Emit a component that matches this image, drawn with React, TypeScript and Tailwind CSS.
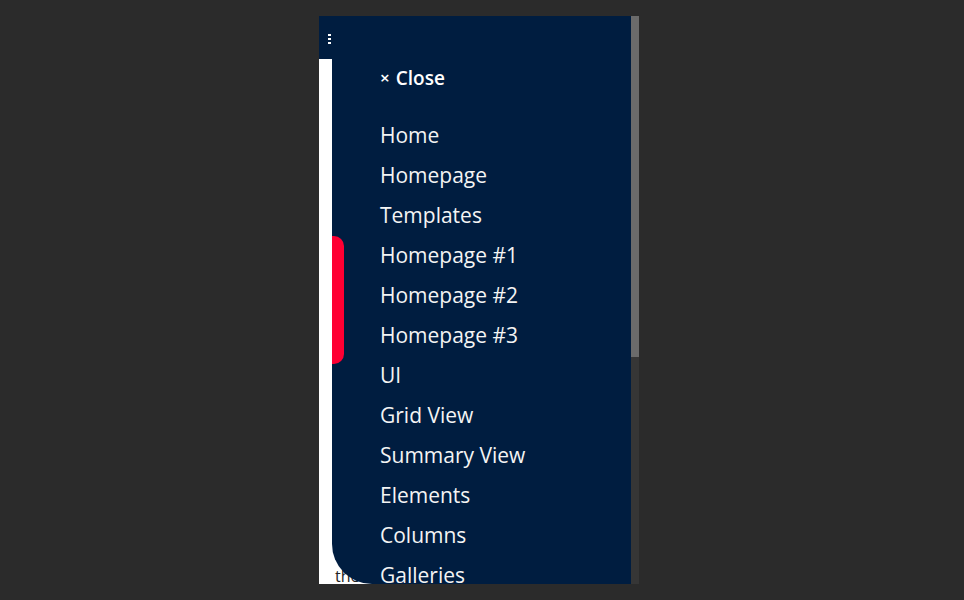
import React from 'react';

const menuItems = [
  'Home',
  'Homepage',
  'Templates',
  'Homepage #1',
  'Homepage #2',
  'Homepage #3',
  'UI',
  'Grid View',
  'Summary View',
  'Elements',
  'Columns',
  'Galleries',
];

export default function App() {
  return (
    <div className="w-[964px] h-[600px] bg-[#2b2b2b] pt-[16px] pl-[319px] overflow-hidden">
      <div className="flex w-[320px] h-[568px]">
        {/* page viewport */}
        <div className="relative w-[312px] h-full bg-white overflow-hidden">
          <div className="h-[43px] bg-[#001d40] flex items-center pl-[9px] pt-[2px]">
            <div className="flex flex-col gap-[2px]">
              <span className="block w-[3px] h-[2px] bg-white" />
              <span className="block w-[3px] h-[2px] bg-white" />
              <span className="block w-[3px] h-[2px] bg-white" />
            </div>
          </div>

          <p className="absolute left-[16px] top-[548px] text-[16px] text-[#222] font-['Open_Sans',sans-serif]">
            the
          </p>

          {/* slide-out menu */}
          <nav
            className="absolute left-[13px] top-0 right-0 bottom-0 bg-[#001d40] rounded-bl-[40px] pt-[50px] pl-[48px] text-[#f4f4f4]"
            style={{ fontFamily: '"Open Sans", sans-serif' }}
          >
            <button className="h-[24px] leading-[24px] text-[19px] font-semibold flex items-center gap-[6px] text-white">
              <span className="text-[17px]">×</span>
              Close
            </button>
            <ul className="mt-[25px]">
              {menuItems.map((item) => (
                <li key={item} className="h-[40px] leading-[40px] text-[21px] whitespace-nowrap">
                  {item}
                </li>
              ))}
            </ul>
          </nav>

          <div className="absolute left-[13px] top-[220px] w-[12px] h-[128px] bg-[#ff0033] rounded-r-[10px]" />
        </div>

        {/* scrollbar */}
        <div className="w-[8px] h-full bg-[#363636] flex flex-col">
          <div className="h-[341px] bg-[#6b6b6b]" />
        </div>
      </div>
    </div>
  );
}
